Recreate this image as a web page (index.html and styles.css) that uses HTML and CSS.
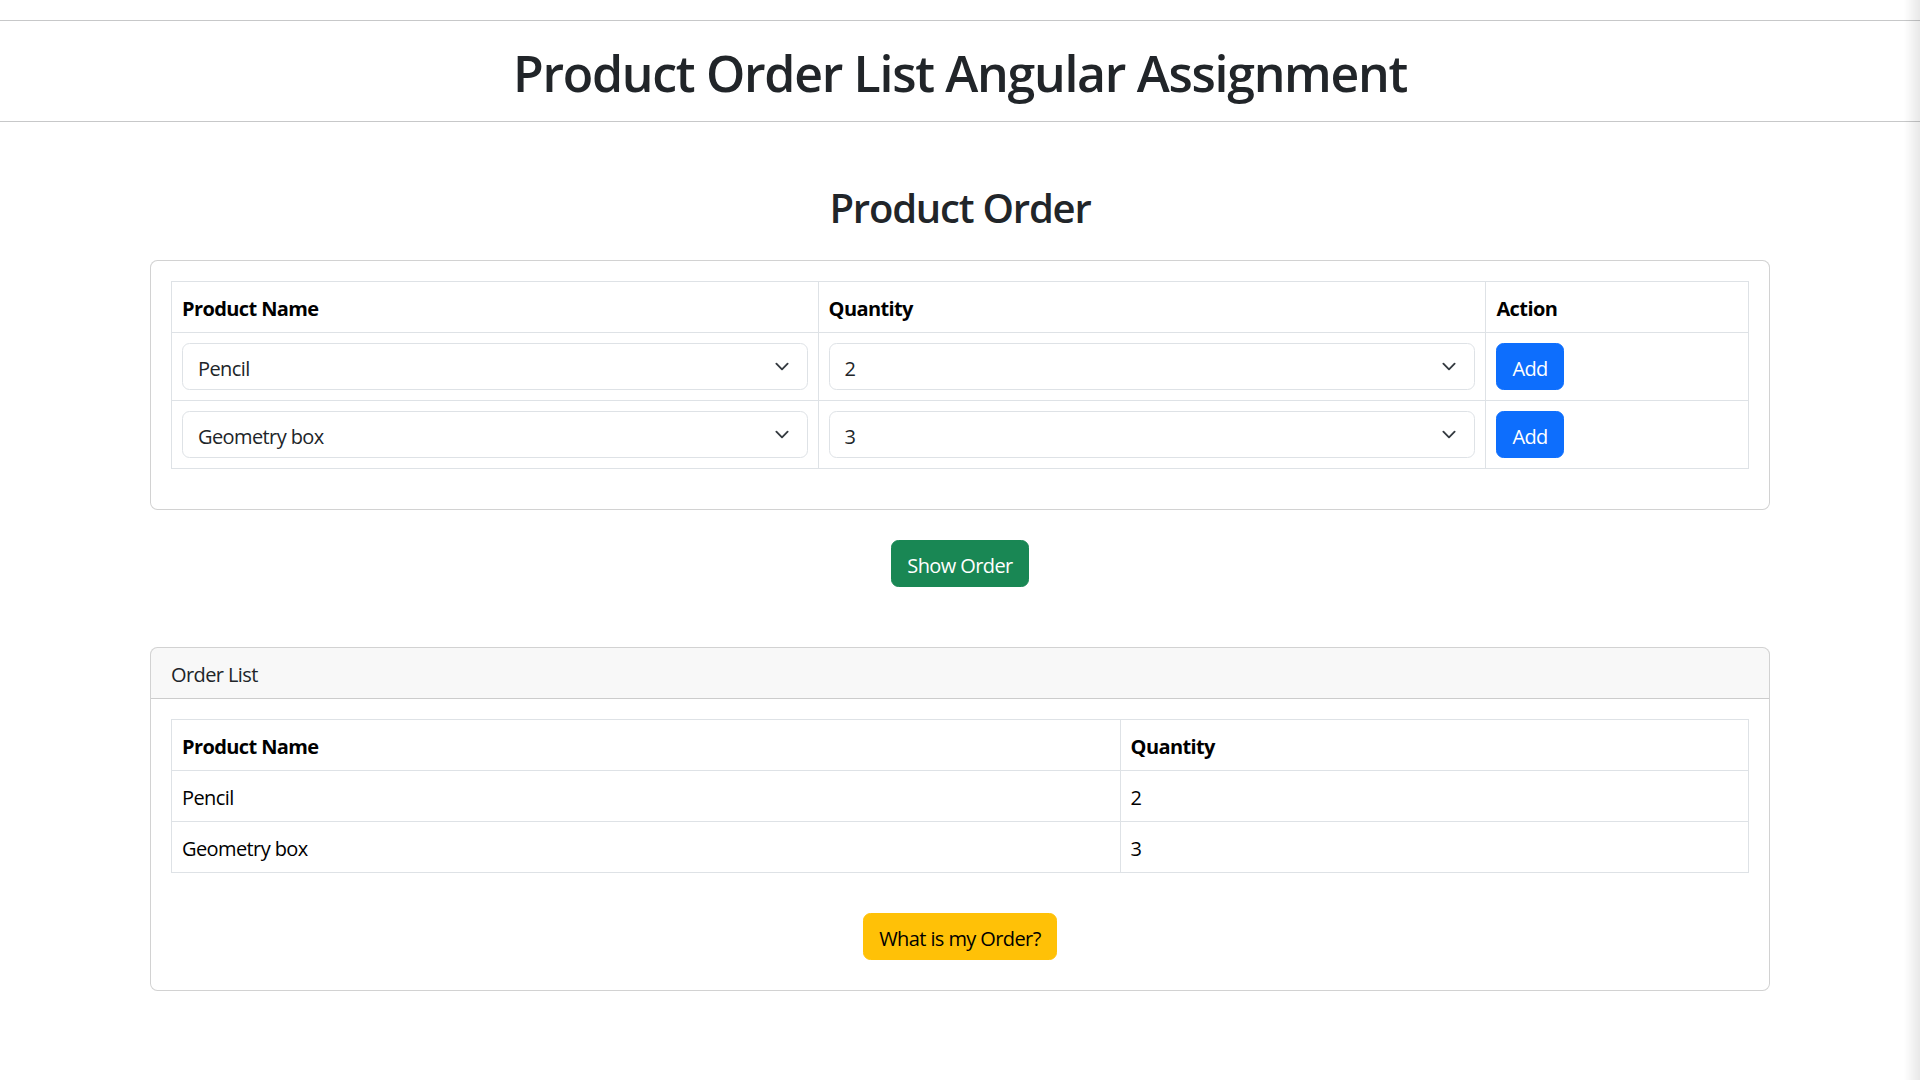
FILE: index.html
```html
<!DOCTYPE html>
<html lang="en">
<head>
<meta charset="utf-8">
<title>Product Order List Angular Assignment</title>
<link rel="stylesheet" href="styles.css">
</head>
<body>
<hr class="rule">
<h1 class="page-title">Product Order List Angular Assignment</h1>
<hr class="rule">

<main class="container">
  <h2 class="section-title">Product Order</h2>

  <div class="card">
    <div class="card-body">
      <table class="table">
        <thead>
          <tr>
            <th class="col-name">Product Name</th>
            <th class="col-qty">Quantity</th>
            <th>Action</th>
          </tr>
        </thead>
        <tbody>
          <tr>
            <td>
              <div class="form-select"><span>Pencil</span>
                <svg class="chev" width="20" height="15" viewBox="0 0 16 16"><path d="m2 5 6 6 6-6" fill="none" stroke="#343a40" stroke-width="2" stroke-linecap="round" stroke-linejoin="round"/></svg>
              </div>
            </td>
            <td>
              <div class="form-select"><span>2</span>
                <svg class="chev" width="20" height="15" viewBox="0 0 16 16"><path d="m2 5 6 6 6-6" fill="none" stroke="#343a40" stroke-width="2" stroke-linecap="round" stroke-linejoin="round"/></svg>
              </div>
            </td>
            <td><button class="btn btn-primary">Add</button></td>
          </tr>
          <tr>
            <td>
              <div class="form-select"><span>Geometry box</span>
                <svg class="chev" width="20" height="15" viewBox="0 0 16 16"><path d="m2 5 6 6 6-6" fill="none" stroke="#343a40" stroke-width="2" stroke-linecap="round" stroke-linejoin="round"/></svg>
              </div>
            </td>
            <td>
              <div class="form-select"><span>3</span>
                <svg class="chev" width="20" height="15" viewBox="0 0 16 16"><path d="m2 5 6 6 6-6" fill="none" stroke="#343a40" stroke-width="2" stroke-linecap="round" stroke-linejoin="round"/></svg>
              </div>
            </td>
            <td><button class="btn btn-primary">Add</button></td>
          </tr>
        </tbody>
      </table>
    </div>
  </div>

  <div class="center show-wrap">
    <button class="btn btn-success">Show Order</button>
  </div>

  <div class="card order-card">
    <div class="card-header">Order List</div>
    <div class="card-body">
      <table class="table">
        <thead>
          <tr>
            <th class="col-order-name">Product Name</th>
            <th>Quantity</th>
          </tr>
        </thead>
        <tbody>
          <tr><td>Pencil</td><td>2</td></tr>
          <tr><td>Geometry box</td><td>3</td></tr>
        </tbody>
      </table>
      <div class="center what-wrap">
        <button class="btn btn-warning">What is my Order?</button>
      </div>
    </div>
  </div>
</main>
<div class="edge-shadow"></div>
</body>
</html>
```
FILE: styles.css
```css
*, *::before, *::after { box-sizing: border-box; }

body {
  margin: 0;
  font-family: "Open Sans", "Noto Sans", "Liberation Sans", sans-serif;
  font-size: 20px;
  line-height: 1.5;
  letter-spacing: -0.6px;
  color: #212529;
  background: #fff;
}

.rule {
  margin: 20px 0;
  border: 0;
  border-top: 1px solid #212529;
  opacity: .25;
}

.page-title {
  margin: 0 0 10px;
  padding-top: 2px;
  height: 60px;
  font-size: 50px;
  font-weight: 600;
  line-height: 1.2;
  text-align: center;
  letter-spacing: -1.3px;
}

.container {
  width: 1650px;
  margin: 60px auto 0;
  padding: 0 15px;
}

.section-title {
  margin: 0 0 30px;
  padding-top: 2px;
  height: 48px;
  font-size: 40px;
  font-weight: 600;
  line-height: 1.2;
  text-align: center;
  letter-spacing: -1.2px;
}

.card {
  border: 1px solid rgba(0, 0, 0, .175);
  border-radius: 7.5px;
  background: #fff;
}

.card-header {
  padding: 12px 20px 8px;
  background: rgba(33, 37, 41, .03);
  border-bottom: 1px solid rgba(0, 0, 0, .175);
  border-radius: 6.5px 6.5px 0 0;
}

.card-body { padding: 20px; }

.table {
  width: 100%;
  border-collapse: collapse;
  table-layout: fixed;
  margin-bottom: 20px;
  color: #000;
  vertical-align: top;
}

.table th, .table td {
  padding: 12px 10px 8px;
  border: 1px solid #dee2e6;
  text-align: left;
}

.table tbody td:has(.form-select), .table tbody td:has(.btn) {
  padding: 10px;
}

.table th { font-weight: 700; }

.col-name { width: 41%; }
.col-qty { width: 42.35%; }
.col-order-name { width: 60.15%; }

.form-select {
  display: flex;
  align-items: center;
  justify-content: space-between;
  padding: 9.5px 15px 5.5px;
  border: 1px solid #dee2e6;
  border-radius: 7.5px;
  line-height: 30px;
  color: #212529;
  background: #fff;
}

.chev { flex: none; margin-top: -4px; }

.btn {
  display: inline-block;
  padding: 9.5px 15px 5.5px;
  font-family: inherit;
  font-size: 20px;
  font-weight: 400;
  line-height: 30px;
  letter-spacing: -0.6px;
  border: 1px solid transparent;
  border-radius: 7.5px;
  cursor: pointer;
}

.btn-primary { background: #0d6efd; border-color: #0d6efd; color: #fff; }
.btn-success { background: #198754; border-color: #198754; color: #fff; }
.btn-warning { background: #ffc107; border-color: #ffc107; color: #000; }

.center { text-align: center; }
.show-wrap { margin-top: 30px; }
.order-card { margin-top: 60px; }
.what-wrap { margin-top: 40px; margin-bottom: 10px; }

.edge-shadow {
  position: fixed;
  top: 0;
  right: 0;
  width: 16px;
  height: 100%;
  background: linear-gradient(to right, rgba(0, 0, 0, 0), rgba(0, 0, 0, .09));
  pointer-events: none;
}
```
